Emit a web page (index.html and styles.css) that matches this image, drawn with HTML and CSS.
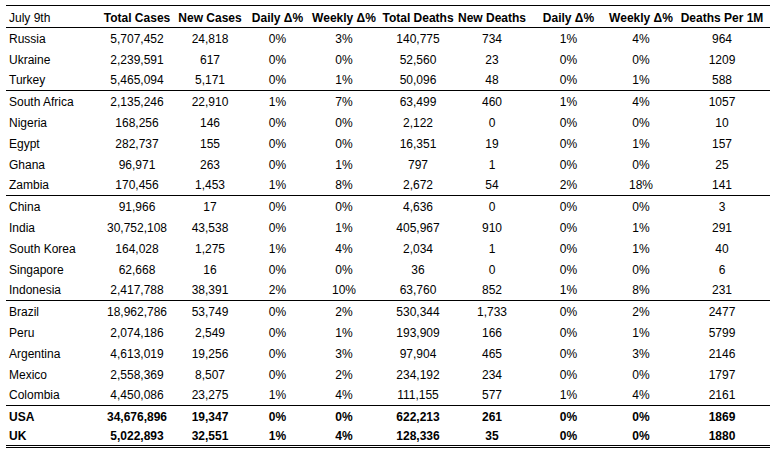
FILE: index.html
```html
<!DOCTYPE html>
<html>
<head>
<meta charset="utf-8">
<link rel="stylesheet" href="styles.css">
</head>
<body>
<div class="tbl">
  <div class="row head">
    <div class="c name date">July 9th</div><div class="c">Total Cases</div><div class="c">New Cases</div><div class="c">Daily Δ%</div><div class="c">Weekly Δ%</div><div class="c">Total Deaths</div><div class="c">New Deaths</div><div class="c">Daily Δ%</div><div class="c">Weekly Δ%</div><div class="c">Deaths Per 1M</div>
  </div>
  <div class="row"><div class="c name">Russia</div><div class="c">5,707,452</div><div class="c">24,818</div><div class="c">0%</div><div class="c">3%</div><div class="c">140,775</div><div class="c">734</div><div class="c">1%</div><div class="c">4%</div><div class="c">964</div></div>
  <div class="row"><div class="c name">Ukraine</div><div class="c">2,239,591</div><div class="c">617</div><div class="c">0%</div><div class="c">0%</div><div class="c">52,560</div><div class="c">23</div><div class="c">0%</div><div class="c">0%</div><div class="c">1209</div></div>
  <div class="row end"><div class="c name">Turkey</div><div class="c">5,465,094</div><div class="c">5,171</div><div class="c">0%</div><div class="c">1%</div><div class="c">50,096</div><div class="c">48</div><div class="c">0%</div><div class="c">1%</div><div class="c">588</div></div>
  <div class="row"><div class="c name">South Africa</div><div class="c">2,135,246</div><div class="c">22,910</div><div class="c">1%</div><div class="c">7%</div><div class="c">63,499</div><div class="c">460</div><div class="c">1%</div><div class="c">4%</div><div class="c">1057</div></div>
  <div class="row"><div class="c name">Nigeria</div><div class="c">168,256</div><div class="c">146</div><div class="c">0%</div><div class="c">0%</div><div class="c">2,122</div><div class="c">0</div><div class="c">0%</div><div class="c">0%</div><div class="c">10</div></div>
  <div class="row"><div class="c name">Egypt</div><div class="c">282,737</div><div class="c">155</div><div class="c">0%</div><div class="c">0%</div><div class="c">16,351</div><div class="c">19</div><div class="c">0%</div><div class="c">1%</div><div class="c">157</div></div>
  <div class="row"><div class="c name">Ghana</div><div class="c">96,971</div><div class="c">263</div><div class="c">0%</div><div class="c">1%</div><div class="c">797</div><div class="c">1</div><div class="c">0%</div><div class="c">0%</div><div class="c">25</div></div>
  <div class="row end"><div class="c name">Zambia</div><div class="c">170,456</div><div class="c">1,453</div><div class="c">1%</div><div class="c">8%</div><div class="c">2,672</div><div class="c">54</div><div class="c">2%</div><div class="c">18%</div><div class="c">141</div></div>
  <div class="row"><div class="c name">China</div><div class="c">91,966</div><div class="c">17</div><div class="c">0%</div><div class="c">0%</div><div class="c">4,636</div><div class="c">0</div><div class="c">0%</div><div class="c">0%</div><div class="c">3</div></div>
  <div class="row"><div class="c name">India</div><div class="c">30,752,108</div><div class="c">43,538</div><div class="c">0%</div><div class="c">1%</div><div class="c">405,967</div><div class="c">910</div><div class="c">0%</div><div class="c">1%</div><div class="c">291</div></div>
  <div class="row"><div class="c name">South Korea</div><div class="c">164,028</div><div class="c">1,275</div><div class="c">1%</div><div class="c">4%</div><div class="c">2,034</div><div class="c">1</div><div class="c">0%</div><div class="c">1%</div><div class="c">40</div></div>
  <div class="row"><div class="c name">Singapore</div><div class="c">62,668</div><div class="c">16</div><div class="c">0%</div><div class="c">0%</div><div class="c">36</div><div class="c">0</div><div class="c">0%</div><div class="c">0%</div><div class="c">6</div></div>
  <div class="row end"><div class="c name">Indonesia</div><div class="c">2,417,788</div><div class="c">38,391</div><div class="c">2%</div><div class="c">10%</div><div class="c">63,760</div><div class="c">852</div><div class="c">1%</div><div class="c">8%</div><div class="c">231</div></div>
  <div class="row"><div class="c name">Brazil</div><div class="c">18,962,786</div><div class="c">53,749</div><div class="c">0%</div><div class="c">2%</div><div class="c">530,344</div><div class="c">1,733</div><div class="c">0%</div><div class="c">2%</div><div class="c">2477</div></div>
  <div class="row"><div class="c name">Peru</div><div class="c">2,074,186</div><div class="c">2,549</div><div class="c">0%</div><div class="c">1%</div><div class="c">193,909</div><div class="c">166</div><div class="c">0%</div><div class="c">1%</div><div class="c">5799</div></div>
  <div class="row"><div class="c name">Argentina</div><div class="c">4,613,019</div><div class="c">19,256</div><div class="c">0%</div><div class="c">3%</div><div class="c">97,904</div><div class="c">465</div><div class="c">0%</div><div class="c">3%</div><div class="c">2146</div></div>
  <div class="row"><div class="c name">Mexico</div><div class="c">2,558,369</div><div class="c">8,507</div><div class="c">0%</div><div class="c">2%</div><div class="c">234,192</div><div class="c">234</div><div class="c">0%</div><div class="c">0%</div><div class="c">1797</div></div>
  <div class="row end"><div class="c name">Colombia</div><div class="c">4,450,086</div><div class="c">23,275</div><div class="c">1%</div><div class="c">4%</div><div class="c">111,155</div><div class="c">577</div><div class="c">1%</div><div class="c">4%</div><div class="c">2161</div></div>
  <div class="row bold"><div class="c name">USA</div><div class="c">34,676,896</div><div class="c">19,347</div><div class="c">0%</div><div class="c">0%</div><div class="c">622,213</div><div class="c">261</div><div class="c">0%</div><div class="c">0%</div><div class="c">1869</div></div>
  <div class="row bold last"><div class="c name">UK</div><div class="c">5,022,893</div><div class="c">32,551</div><div class="c">1%</div><div class="c">4%</div><div class="c">128,336</div><div class="c">35</div><div class="c">0%</div><div class="c">0%</div><div class="c">1880</div></div>
</div>
</body>
</html>
```

FILE: styles.css
```css
html, body {
  margin: 0;
  padding: 0;
  background: #ffffff;
}
body {
  padding: 5px 0 0 6px;
  font-family: "Liberation Sans", Arial, sans-serif;
  font-size: 12px;
  color: #000000;
}
.tbl {
  width: 764px;
  border-top: 1px solid #000;
}
.row {
  display: grid;
  grid-template-columns: 96px 70px 76px 59px 74px 74px 74px 79px 66px 96px;
  height: 21px;
  box-sizing: border-box;
  align-items: center;
}
.row.head {
  height: 22px;
  font-weight: bold;
  border-bottom: 1px solid #000;
  padding-top: 2px;
}
.row.head .date {
  font-weight: normal;
}
.row.end {
  border-bottom: 1px solid #000;
}
.row.bold {
  font-weight: bold;
}
.row.last {
  border-bottom: 3px double #000;
}
.c {
  text-align: center;
  white-space: nowrap;
  line-height: 14px;
}
.c.name {
  text-align: left;
  padding-left: 3px;
}
```
